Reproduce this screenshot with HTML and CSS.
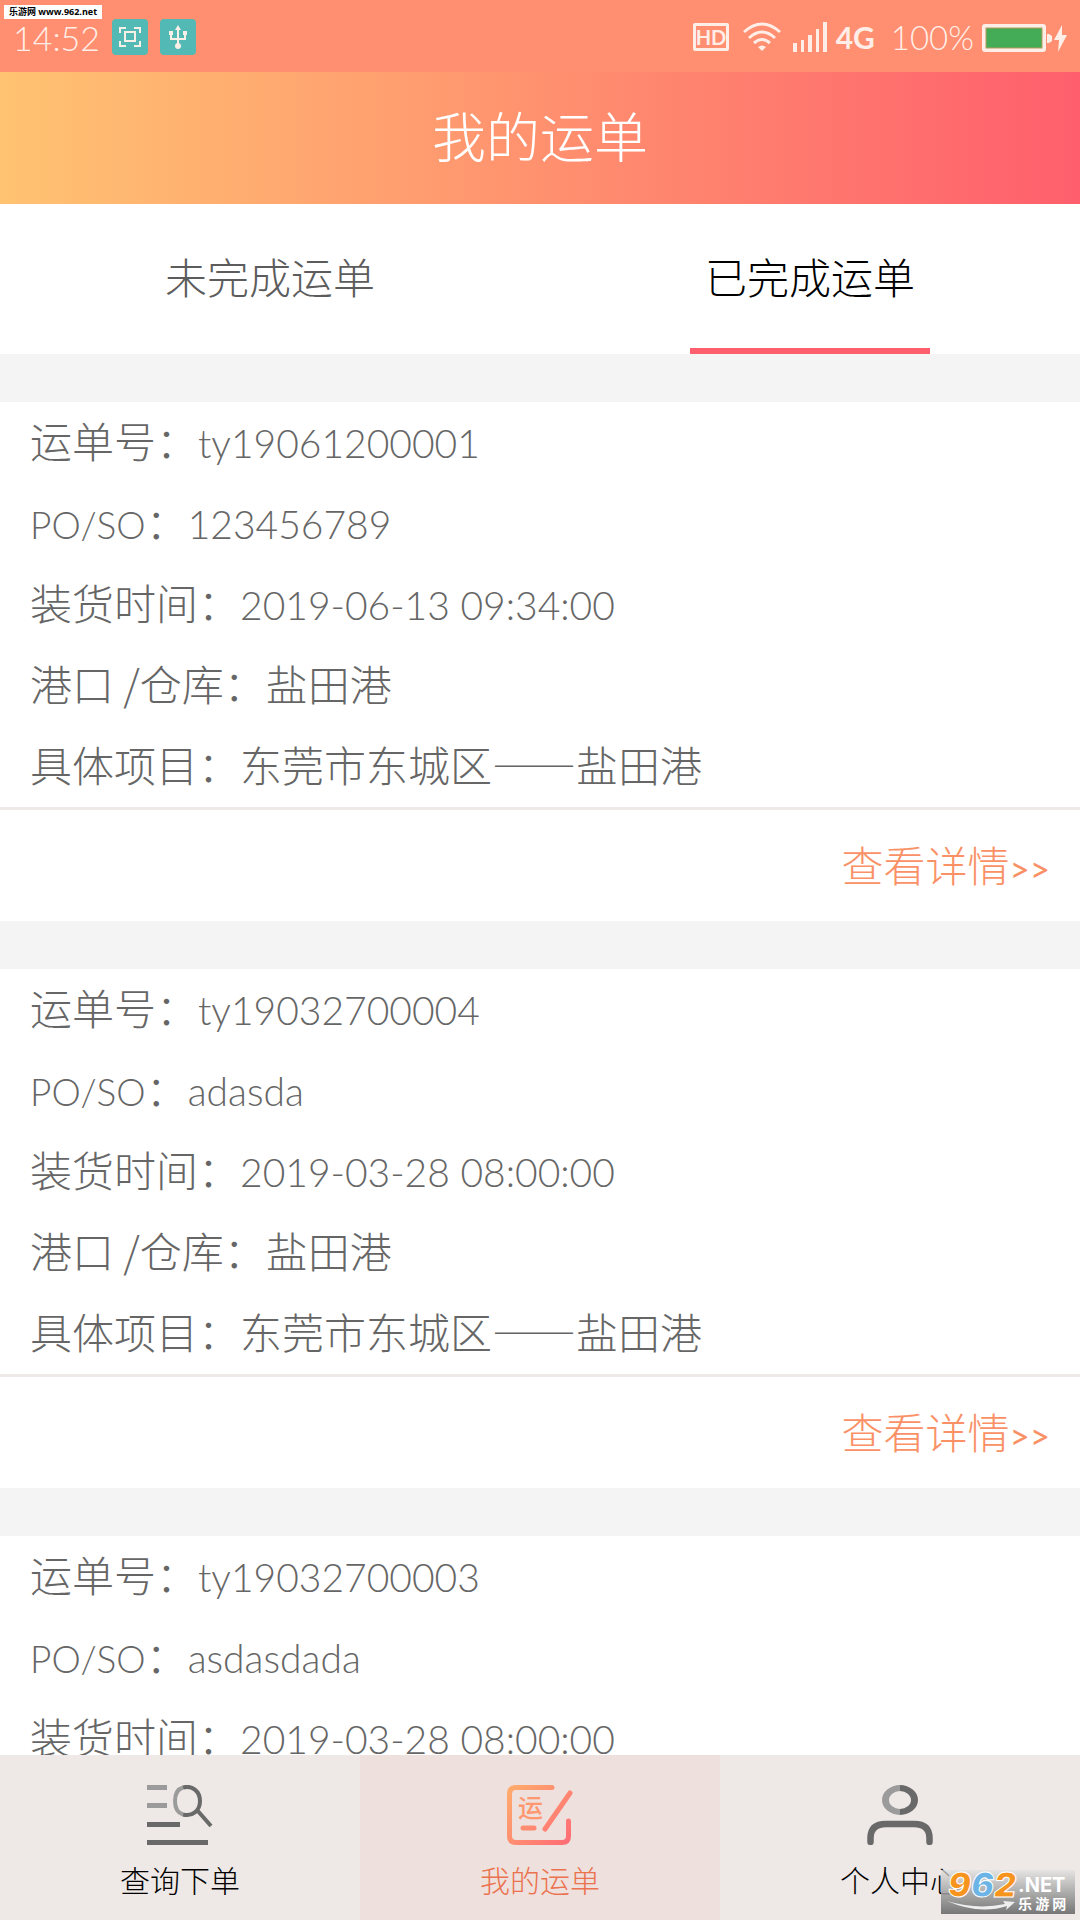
FILE: index.html
```html
<!DOCTYPE html>
<html lang="zh-CN">
<head>
    <meta charset="UTF-8">
    <meta name="viewport" content="width=device-width, initial-scale=1.0">
    <title>我的运单</title>
    <link rel="stylesheet" href="styles.css">
</head>
<body>
    <div class="status-bar">
        <div class="status-left">
            <span class="clock">14:52</span>
            <svg class="badge-icon" viewBox="0 0 36 36">
                <rect width="36" height="36" rx="4" fill="#52b9b5"/>
                <g fill="none" stroke="#f7f0e6" stroke-width="2">
                    <path d="M8 14V9h6M22 9h6v5M28 22v5h-6M14 27H8v-5"/>
                    <rect x="13" y="13" width="10" height="9"/>
                </g>
            </svg>
            <svg class="badge-icon" viewBox="0 0 36 36">
                <rect width="36" height="36" rx="4" fill="#52b9b5"/>
                <path d="M18 9v18M11 14v6h14v-6" fill="none" stroke="#f7f0e6" stroke-width="2"/>
                <path d="M18 6l3 5h-6zM9 12h4v4H9zM23 12h4v4h-4z" fill="#f7f0e6"/>
                <circle cx="18" cy="27" r="3" fill="#f7f0e6"/>
            </svg>
        </div>
        <div class="status-right">
            <span class="hd">HD</span>
            <svg class="wifi" width="38" height="30" viewBox="0 0 38 30">
                <g fill="none" stroke="#ffeee8" stroke-width="3">
                    <path d="M1 10Q19-6 37 10M6 16Q19 4 32 16M11 21Q19 14 27 21"/>
                </g>
                <path d="M15 25q4-3 8 0l-4 4z" fill="#ffeee8"/>
            </svg>
            <svg class="signal" width="34" height="30" viewBox="0 0 34 30" fill="#ffeee8">
                <path d="M0 21h4v9H0zM8 18h3v12H8zM15 13h4v17h-4zM23 7h3v23h-3zM30 0h4v30h-4z"/>
            </svg>
            <span class="network">4G</span>
            <span class="percent">100%</span>
            <svg class="battery" width="86" height="30" viewBox="0 0 86 30">
                <rect x="2" y="4" width="60" height="24" rx="1" fill="#44ab57" stroke="#ffeee8" stroke-width="4"/>
                <rect x="4" y="6" width="56" height="20" fill="none" stroke="#b69b5f" stroke-width="1"/>
                <path d="M65 12h2l3 2v5l-3 2h-2z" fill="#ffeee8"/>
                <path d="M80 3l-8 15h5l-1 12 9-17h-5z" fill="#ffeee8"/>
            </svg>
        </div>
    </div>

    <header class="header">
        <h1>我的运单</h1>
    </header>

    <div class="tabs">
        <button class="tab">未完成运单</button>
        <button class="tab active">已完成运单</button>
    </div>

    <main class="list">
        <section class="card">
            <p>运单号：<span class="latin">ty19061200001</span></p>
            <p><span class="latin-label">PO/SO</span>：<span class="latin">123456789</span></p>
            <p>装货时间：<span class="latin">2019-06-13 09:34:00</span></p>
            <p>港口 /仓库：盐田港</p>
            <p>具体项目：东莞市东城区——盐田港</p>
            <div class="card-footer"><a href="#">查看详情<span class="arrows">&gt;&gt;</span></a></div>
        </section>
        <section class="card">
            <p>运单号：<span class="latin">ty19032700004</span></p>
            <p><span class="latin-label">PO/SO</span>：<span class="latin">adasda</span></p>
            <p>装货时间：<span class="latin">2019-03-28 08:00:00</span></p>
            <p>港口 /仓库：盐田港</p>
            <p>具体项目：东莞市东城区——盐田港</p>
            <div class="card-footer"><a href="#">查看详情<span class="arrows">&gt;&gt;</span></a></div>
        </section>
        <section class="card">
            <p>运单号：<span class="latin">ty19032700003</span></p>
            <p><span class="latin-label">PO/SO</span>：<span class="latin">asdasdada</span></p>
            <p>装货时间：<span class="latin">2019-03-28 08:00:00</span></p>
        </section>
    </main>

    <nav class="bottom-nav">
        <a class="nav-item" href="#">
            <svg width="66" height="60" viewBox="0 0 66 60">
                <path d="M0 0h20v5H0zM0 18h20v5H0z" fill="#9c9b9b"/>
                <path d="M0 37h33v5H0zM0 55h61v5H0z" fill="#696969"/>
                <path d="M36 2.500C31 4 28 9 28 16s3 12 8 13.500" fill="none" stroke="#9c9b9b" stroke-width="4"/>
                <path d="M36 2.500C45 0 53 6 53 16s-8 16-17 13.500M50 25l14 16" fill="none" stroke="#696969" stroke-width="4"/>
            </svg>
            <span>查询下单</span>
        </a>
        <a class="nav-item active" href="#">
            <svg width="66" height="60" viewBox="0 0 66 60">
                <defs>
                    <linearGradient id="orderIcon" gradientUnits="userSpaceOnUse" x1="0" y1="0" x2="66" y2="60">
                        <stop offset="0" stop-color="#ffae6c"/>
                        <stop offset="1" stop-color="#ff6976"/>
                    </linearGradient>
                </defs>
                <path d="M45 2.500H9Q2.500 2.500 2.500 9v42q0 6.500 6.500 6.500h46q6.500 0 6.500-6.500V36M63 8L38 44M16 43h11" fill="none" stroke="url(#orderIcon)" stroke-width="5" stroke-linecap="round"/>
                <text class="icon-text" x="11" y="32">运</text>
            </svg>
            <span>我的运单</span>
        </a>
        <a class="nav-item" href="#">
            <svg width="66" height="60" viewBox="0 0 66 60">
                <path d="M33 0a18 15 0 0 0 0 30v-6a11 9 0 0 1 0-18z" fill="#9c9b9b"/>
                <path d="M33 0a18 15 0 0 1 0 30v-6a11 9 0 0 0 0-18z" fill="#696969"/>
                <path d="M3.500 57v-4Q3.500 39 19 39h28q15.500 0 15.500 14v4" fill="none" stroke="#696969" stroke-width="6.500" stroke-linecap="round"/>
            </svg>
            <span>个人中心</span>
        </a>
    </nav>

    <div class="site-tag">乐游网 www.962.net</div>
    <div class="site-logo">
        <svg width="134" height="44" viewBox="0 0 134 44">
            <path d="M6 31q32 14 60 5l-1 4 9-8-12-1 2 3q-28 6-58-3z" fill="#eeeeee"/>
            <g class="logo-number">
                <text x="7" y="27" fill="#f7941e">9</text>
                <text x="30" y="27" fill="#6bb4e5">6</text>
                <text x="53" y="27" fill="#f7941e">2</text>
            </g>
            <text class="logo-net" x="77" y="22">.NET</text>
            <text class="logo-name" x="77" y="39">乐 游 网</text>
        </svg>
    </div>
</body>
</html>
```
FILE: styles.css
```css
* {
    box-sizing: border-box;
}
body {
    margin: 0;
    height: 100vh;
    display: flex;
    flex-direction: column;
    overflow: hidden;
    background-color: #fff;
    color: #666;
    font-family: "Noto Sans CJK SC", sans-serif;
    font-weight: 300;
}
.status-bar {
    display: flex;
    flex-shrink: 0;
    justify-content: space-between;
    height: 72px;
    padding: 2px 12px 0 13px;
    background-color: #ff8f70;
    color: #ffeee8;
    font-family: Lato, sans-serif;
    font-size: 33px;
}
.status-left, .status-right {
    display: flex;
    align-items: center;
}
.status-left {
    gap: 12px;
}
.clock {
    width: 87px;
    font-size: 34px;
}
.badge-icon {
    width: 36px;
    height: 36px;
}
.hd {
    width: 36px;
    height: 28px;
    border: 3px solid #ffeee8;
    border-radius: 2px;
    font-size: 20px;
    font-weight: bold;
    line-height: 22px;
    text-align: center;
}
.wifi {
    margin-left: 14px;
}
.signal {
    margin-left: 12px;
}
.network {
    margin-left: 9px;
    font-size: 30px;
    font-weight: bold;
}
.percent {
    margin: 0 8px 0 16px;
}
.header {
    display: flex;
    flex-shrink: 0;
    align-items: center;
    justify-content: center;
    height: 132px;
    padding-bottom: 8px;
    background: linear-gradient(to right, #ffc371, #ff5f6d);
    color: #fff;
}
h1 {
    margin: 0;
    font-size: 54px;
    font-weight: 300;
}
.tabs {
    display: flex;
    flex-shrink: 0;
    height: 150px;
}
.tab {
    display: flex;
    flex: 1;
    flex-direction: column;
    align-items: center;
    justify-content: space-between;
    padding: 0;
    border: none;
    background: none;
    color: #5c5c5c;
    font: inherit;
    font-size: 42px;
    line-height: 144px;
}
.tab.active {
    color: #000;
}
.tab.active::after {
    content: "";
    width: 240px;
    height: 6px;
    background-color: #ff5f6d;
}
.list {
    flex: 1;
    min-height: 0;
    overflow: hidden;
}
.card {
    border-top: 48px solid #f4f4f4;
}
.card p {
    height: 81px;
    margin: 0;
    padding: 0 30px;
    font-size: 42px;
    line-height: 76px;
    white-space: nowrap;
}
.latin, .latin-label {
    font-family: Lato, sans-serif;
    font-size: 39px;
    line-height: 1;
}
.latin-label {
    font-size: 37px;
}
.card-footer {
    display: flex;
    align-items: center;
    justify-content: flex-end;
    height: 114px;
    padding: 0 30px 4px;
    border-top: 3px solid #eee8e6;
}
.card-footer a {
    color: #fa9166;
    font-size: 42px;
    text-decoration: none;
}
.arrows {
    font-family: Lato, sans-serif;
    font-size: 35px;
    font-weight: 400;
}
.bottom-nav {
    display: flex;
    flex-shrink: 0;
    height: 165px;
    background-color: #eee9e6;
}
.nav-item {
    display: flex;
    flex: 1;
    flex-direction: column;
    align-items: center;
    gap: 12px;
    padding-top: 30px;
    color: #000;
    font-size: 30px;
    line-height: 44px;
    text-decoration: none;
}
.nav-item.active {
    background-color: #eee0dc;
    color: #eb724f;
}
.icon-text {
    fill: #ff9871;
    font-size: 25px;
    font-weight: 500;
}
.site-tag {
    position: absolute;
    top: 5px;
    left: 4px;
    width: 98px;
    background-color: #fff;
    color: #000;
    font: bold 9px/14px "Open Sans", "Noto Sans CJK SC", sans-serif;
    text-align: center;
    white-space: nowrap;
}
.site-logo {
    position: absolute;
    right: 5px;
    bottom: 6px;
    height: 44px;
    background: linear-gradient(rgba(225, 225, 225, 0.7), #777);
}
.logo-number {
    font: italic 900 34px Inter, sans-serif;
    stroke: #fff;
    stroke-width: 1px;
}
.logo-net {
    fill: #fff;
    font: bold 20px Inter, sans-serif;
}
.logo-name {
    fill: #fff;
    font-size: 14px;
    font-weight: bold;
}
```
